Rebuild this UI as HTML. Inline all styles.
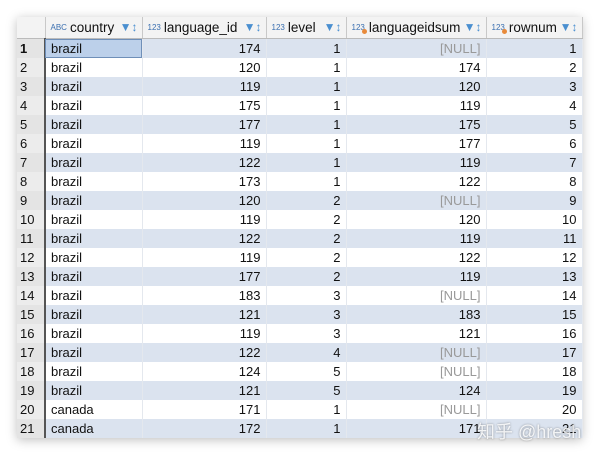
<!DOCTYPE html><html><head><meta charset="utf-8"><style>
body{margin:0;width:600px;height:453px;background:#fff;font-family:"Liberation Sans",Arial,sans-serif;overflow:hidden;position:relative}
.t{position:absolute;left:17px;top:17px;width:565px;box-shadow:0 2px 10px rgba(0,0,0,.25);background:#fff}
table{border-collapse:collapse;table-layout:fixed;width:565px;font-size:13px;color:#111}
td,th{padding:0 5px;height:19px;white-space:nowrap;overflow:hidden;border-right:1px solid #e4e8ee}
th{height:21px;background:#f3f3f3;font-weight:normal;text-align:left;border-right:1px solid #c8c8c8;border-bottom:1px solid #bbb;font-size:13.5px;position:relative}
td.n{background:#ececec;border-right:2px solid #555;padding-left:3px;font-size:13px}
tr.o td{background:#dbe3ef}
tr.o td.n{background:#e4e4e4}
td.r{text-align:right}
.nl{color:#999}
.ty{font-size:8px;color:#3a6fb0;margin-right:3px;vertical-align:2px}
.f{position:absolute;right:4px;top:3px;color:#4a8fd0;font-size:12px}
.sel{background:#bcd0ea!important;outline:1px solid #6f8fb8;outline-offset:-1px}
.dot{display:inline-block;width:5px;height:5px;border-radius:50%;background:#e88a3a;margin-left:-6px;margin-right:2px;vertical-align:-2px}
.wm{position:absolute;left:477px;top:418px;color:rgba(255,255,255,.85);font-size:18px;text-shadow:0 0 2px rgba(0,0,0,.4)}
</style></head><body>
<div class="t"><table>
<colgroup><col style="width:28px"><col style="width:97px"><col style="width:124px"><col style="width:80px"><col style="width:140px"><col style="width:96px"></colgroup>
<tr><th></th><th><span class="ty">ABC</span>country<span class="f">▼↕</span></th><th><span class="ty">123</span>language_id<span class="f">▼↕</span></th><th><span class="ty">123</span>level<span class="f">▼↕</span></th><th><span class="ty">123</span><span class="dot"></span>languageidsum<span class="f">▼↕</span></th><th><span class="ty">123</span><span class="dot"></span>rownum<span class="f">▼↕</span></th></tr>
<tr class="o"><td class="n" style="font-weight:bold">1</td><td class="sel">brazil</td><td class="r">174</td><td class="r">1</td><td class="r nl">[NULL]</td><td class="r">1</td></tr>
<tr><td class="n">2</td><td>brazil</td><td class="r">120</td><td class="r">1</td><td class="r">174</td><td class="r">2</td></tr>
<tr class="o"><td class="n">3</td><td>brazil</td><td class="r">119</td><td class="r">1</td><td class="r">120</td><td class="r">3</td></tr>
<tr><td class="n">4</td><td>brazil</td><td class="r">175</td><td class="r">1</td><td class="r">119</td><td class="r">4</td></tr>
<tr class="o"><td class="n">5</td><td>brazil</td><td class="r">177</td><td class="r">1</td><td class="r">175</td><td class="r">5</td></tr>
<tr><td class="n">6</td><td>brazil</td><td class="r">119</td><td class="r">1</td><td class="r">177</td><td class="r">6</td></tr>
<tr class="o"><td class="n">7</td><td>brazil</td><td class="r">122</td><td class="r">1</td><td class="r">119</td><td class="r">7</td></tr>
<tr><td class="n">8</td><td>brazil</td><td class="r">173</td><td class="r">1</td><td class="r">122</td><td class="r">8</td></tr>
<tr class="o"><td class="n">9</td><td>brazil</td><td class="r">120</td><td class="r">2</td><td class="r nl">[NULL]</td><td class="r">9</td></tr>
<tr><td class="n">10</td><td>brazil</td><td class="r">119</td><td class="r">2</td><td class="r">120</td><td class="r">10</td></tr>
<tr class="o"><td class="n">11</td><td>brazil</td><td class="r">122</td><td class="r">2</td><td class="r">119</td><td class="r">11</td></tr>
<tr><td class="n">12</td><td>brazil</td><td class="r">119</td><td class="r">2</td><td class="r">122</td><td class="r">12</td></tr>
<tr class="o"><td class="n">13</td><td>brazil</td><td class="r">177</td><td class="r">2</td><td class="r">119</td><td class="r">13</td></tr>
<tr><td class="n">14</td><td>brazil</td><td class="r">183</td><td class="r">3</td><td class="r nl">[NULL]</td><td class="r">14</td></tr>
<tr class="o"><td class="n">15</td><td>brazil</td><td class="r">121</td><td class="r">3</td><td class="r">183</td><td class="r">15</td></tr>
<tr><td class="n">16</td><td>brazil</td><td class="r">119</td><td class="r">3</td><td class="r">121</td><td class="r">16</td></tr>
<tr class="o"><td class="n">17</td><td>brazil</td><td class="r">122</td><td class="r">4</td><td class="r nl">[NULL]</td><td class="r">17</td></tr>
<tr><td class="n">18</td><td>brazil</td><td class="r">124</td><td class="r">5</td><td class="r nl">[NULL]</td><td class="r">18</td></tr>
<tr class="o"><td class="n">19</td><td>brazil</td><td class="r">121</td><td class="r">5</td><td class="r">124</td><td class="r">19</td></tr>
<tr><td class="n">20</td><td>canada</td><td class="r">171</td><td class="r">1</td><td class="r nl">[NULL]</td><td class="r">20</td></tr>
<tr class="o"><td class="n">21</td><td>canada</td><td class="r">172</td><td class="r">1</td><td class="r">171</td><td class="r">21</td></tr>
</table></div>
<div class="wm" style="font-family:'Liberation Sans','Noto Sans CJK SC',sans-serif">知乎 @hresh</div>
</body></html>
